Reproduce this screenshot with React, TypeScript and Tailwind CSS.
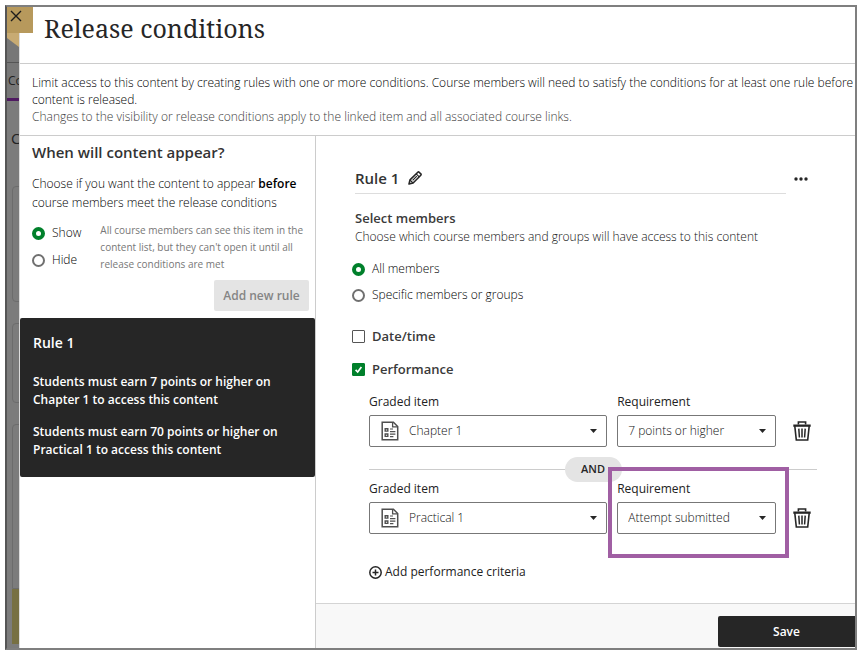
import type { ReactNode } from 'react'

type Criterion = { id: string; item: string; requirement: string; highlighted?: boolean }

const criteria: Criterion[] = [
  { id: 'chapter', item: 'Chapter 1', requirement: '7 points or higher' },
  { id: 'practical', item: 'Practical 1', requirement: 'Attempt submitted', highlighted: true },
]

function Radio({ name, label, checked }: { name: string; label: string; checked?: boolean }) {
  return (
    <label className="flex items-center gap-[7px] text-[12px] leading-[18px] font-light text-black">
      <input
        type="radio"
        name={name}
        defaultChecked={checked}
        className="size-[13px] shrink-0 appearance-none rounded-full border-2 border-[#707070] bg-white checked:border-[4px] checked:border-[#00802b]"
      />
      {label}
    </label>
  )
}

function Checkbox({ label, checked }: { label: string; checked?: boolean }) {
  return (
    <label className="flex items-center gap-[7px] text-[13px] leading-[19px] font-semibold text-[#3a3a3a]">
      <span className="grid size-[13px] shrink-0">
        <input
          type="checkbox"
          defaultChecked={checked}
          className="peer col-start-1 row-start-1 size-[13px] appearance-none rounded-[1px] border border-[#555] bg-white checked:border-[#00802b] checked:bg-[#00802b]"
        />
        <svg
          viewBox="0 0 13 13"
          className="pointer-events-none col-start-1 row-start-1 hidden size-[13px] peer-checked:block"
          fill="none"
          stroke="#fff"
          strokeWidth="1.7"
        >
          <path d="M3.6 6.8 5.7 9 9.4 4" />
        </svg>
      </span>
      {label}
    </label>
  )
}

function DocumentIcon() {
  return (
    <svg viewBox="0 0 18 20" className="h-5 w-[18px]" fill="none" stroke="#4f4f4f" strokeWidth="1.5">
      <path d="M1.2 1.2h11.2l4.3 4.3v13.3H1.2z" />
      <path d="M11.6 1.5v4.4h4.8" strokeWidth="1.3" />
      <path d="M4.2 7.7h2.6v2.4H4.2zM4.2 13h2.6v2.4H4.2z" strokeWidth="1.4" />
      <path d="M9 8h3M9 10.6h5.4M9 13.2h5.4M9 15.7h3.4" strokeWidth="1.2" />
    </svg>
  )
}

function TrashIcon() {
  return (
    <svg viewBox="0 0 18 20" className="h-5 w-[18px]" fill="none" stroke="#262626" strokeWidth="1.6">
      <path d="M5.4 3.4V1h7.2v2.4" />
      <path d="M.3 3.5h17.4v2.3H.3z" fill="#262626" stroke="none" />
      <path d="M1.8 5.2 3.3 19h11.4l1.5-13.8" />
      <path d="M5.8 7.6l.6 8.9M9 7.6v8.9M12.2 7.6l-.6 8.9" strokeWidth="1.5" />
    </svg>
  )
}

function Dropdown({ id, label, value, icon }: { id: string; label: string; value: string; icon?: ReactNode }) {
  return (
    <div className="flex min-w-0 flex-col gap-1">
      <label htmlFor={id} className="text-[12px] leading-[18px] font-medium text-[#222]">
        {label}
      </label>
      <div className="grid items-center">
        <select
          id={id}
          className={`col-start-1 row-start-1 h-8 w-full appearance-none rounded-[2px] border border-[#777] bg-white pr-6 text-[12px] font-light text-[#111] ${icon ? 'pl-[39px]' : 'pl-[10px]'}`}
        >
          <option>{value}</option>
        </select>
        {icon && <span className="pointer-events-none col-start-1 row-start-1 justify-self-start pl-3">{icon}</span>}
        <svg viewBox="0 0 7 4" className="pointer-events-none col-start-1 row-start-1 mr-[10px] h-1 w-[7px] justify-self-end">
          <path d="M0 0h7L3.5 4z" fill="#262626" />
        </svg>
      </div>
    </div>
  )
}

function CriterionRow({ id, item, requirement, highlighted }: Criterion) {
  return (
    <div className="grid grid-cols-[3fr_2fr_31px] gap-x-[10px]">
      <Dropdown id={`${id}-item`} label="Graded item" value={item} icon={<DocumentIcon />} />
      <div className="relative">
        <Dropdown id={`${id}-requirement`} label="Requirement" value={requirement} />
        {highlighted && (
          <div className="pointer-events-none absolute -top-[13px] -right-[13px] -bottom-6 -left-[9px] border-4 border-[#a05fa3]" />
        )}
      </div>
      <button type="button" aria-label={`Delete ${item}`} className="mt-[22px] flex h-8 items-center pl-[7px]">
        <TrashIcon />
      </button>
    </div>
  )
}

function CourseEdge() {
  return (
    <div className="flex w-3 shrink-0 flex-col overflow-hidden bg-[#777] text-[12px] leading-[18px] text-[#222]">
      <div className="h-[56px] border-b border-[#555]">
        <svg viewBox="0 0 12 40" className="h-10 w-3">
          <path d="M0 0h12v40L0 31z" fill="#c8ab73" />
        </svg>
      </div>
      <span className="mt-[9px] pl-px">Co</span>
      <div className="mt-[8px] h-[3px] shrink-0 bg-[#4f1a61]" />
      <div className="flex flex-1 flex-col bg-[#7c7c7c]">
        <span className="mt-[28px] pl-1 text-[15px]">C</span>
        <div className="mt-[39px] ml-[5px] h-[116px] w-8 rounded border border-[#6c6c6c]" />
        <div className="mt-[21px] ml-[5px] h-[80px] w-8 rounded border border-[#6c6c6c]" />
        <div className="mt-[21px] ml-[5px] w-8 flex-1 rounded-t border border-[#6c6c6c]" />
        <div className="mb-1 ml-[5px] h-[55px] bg-[#777043]" />
      </div>
    </div>
  )
}

export default function App() {
  return (
    <div className="flex min-h-screen bg-white pt-[5px] pr-1 pb-[3px] pl-[5px] font-['Open_Sans','Noto_Sans',sans-serif]">
      <div className="relative flex flex-1 border-2 border-[#7f7f7f] border-l-[#555]">
        <CourseEdge />
        <button
          type="button"
          aria-label="Close"
          className="absolute top-0 left-0 flex size-[26px] items-center justify-center bg-[#b7995c] pr-2 pb-2"
        >
          <svg viewBox="0 0 12 12" className="size-3 shrink-0" stroke="#1c1c1c" strokeWidth="1.4">
            <path d="m1 1 10 10M11 1 1 11" />
          </svg>
        </button>

        <div className="flex min-w-0 flex-1 flex-col border-l border-[#ddd]">
          <header className="h-[57px] border-b border-[#ccc] pt-[3px] pl-6">
            <h1 className="font-['Noto_Serif','DejaVu_Serif',serif] text-[25px] leading-9 text-[#262626]">
              Release conditions
            </h1>
          </header>
          <div className="border-b border-[#ccc] py-[10px] pl-3 text-[12px] leading-[17px] font-light text-black">
            <p>
              Limit access to this content by creating rules with one or more conditions. Course members will need to
              satisfy the conditions for at least one rule before content is released.
            </p>
            <p className="text-[#3d3d3d]">
              Changes to the visibility or release conditions apply to the linked item and all associated course links.
            </p>
          </div>

          <div className="flex flex-1">
            <aside className="flex w-[296px] shrink-0 flex-col border-r border-[#ccc]">
              <div className="flex flex-col px-3 pt-[6px] pb-[7px]">
                <h2 className="text-[15px] leading-5 font-semibold text-[#333]">When will content appear?</h2>
                <p className="mt-3 text-[12px] leading-[19px] font-light text-black">
                  Choose if you want the content to appear <b className="font-semibold">before</b> course members meet
                  the release conditions
                </p>
                <div className="mt-[9px] -mr-2 flex gap-[19px]">
                  <fieldset className="mt-[3px] flex shrink-0 flex-col gap-[9px]">
                    <Radio name="visibility" label="Show" checked />
                    <Radio name="visibility" label="Hide" />
                  </fieldset>
                  <p className="mt-px text-[10px] leading-[17px] text-[#777]">
                    All course members can see this item in the content list, but they can't open it until all release
                    conditions are met
                  </p>
                </div>
                <button
                  type="button"
                  disabled
                  className="mt-[7px] -mr-[6px] h-[31px] w-[95px] self-end rounded-[2px] bg-[#e4e4e4] text-[12px] font-semibold text-[#858585]"
                >
                  Add new rule
                </button>
              </div>
              <section className="rounded-[2px] bg-[#262626] px-[13px] pt-[15px] pb-[18px] text-[12px] leading-[18px] font-semibold text-white">
                <h3 className="text-[14px] leading-5">Rule 1</h3>
                <p className="mt-5">Students must earn 7 points or higher on Chapter 1 to access this content</p>
                <p className="mt-[14px]">Students must earn 70 points or higher on Practical 1 to access this content</p>
              </section>
            </aside>

            <main className="flex min-w-0 flex-1 flex-col">
              <div className="flex flex-1 flex-col pr-[38px] pl-9">
                <div className="flex gap-2 pl-[3px]">
                  <div className="mt-[32px] flex flex-1 items-center gap-[9px] border-b border-[#ddd] pb-[5px]">
                    <h2 className="text-[15px] leading-5 font-semibold text-[#333]">Rule 1</h2>
                    <button type="button" aria-label="Rename rule">
                      <svg viewBox="0 0 14 14" className="size-[14px]" fill="none" stroke="#262626" strokeWidth="1.6" strokeLinejoin="round">
                        <path d="M1 13 2 8.9 9.8 1.2q.6-.6 1.3 0l1.7 1.7q.6.6 0 1.3L5.1 12z" />
                        <path d="m8.2 2.8 3 3M4.6 9.4l4.2-4.2M2 9l3 3" strokeWidth="1.2" />
                      </svg>
                    </button>
                  </div>
                  <button type="button" aria-label="More options" className="mt-[37px] h-3 w-[23px]">
                    <svg viewBox="0 0 14 4" className="h-1 w-[14px]" fill="#262626">
                      <circle cx="2" cy="2" r="1.7" />
                      <circle cx="7" cy="2" r="1.7" />
                      <circle cx="12" cy="2" r="1.7" />
                    </svg>
                  </button>
                </div>
                <div className="mt-[14px] pl-[3px]">
                  <h3 className="text-[13px] leading-5 font-semibold text-[#3a3a3a]">Select members</h3>
                  <p className="text-[12px] leading-[18px] font-light text-[#111]">
                    Choose which course members and groups will have access to this content
                  </p>
                </div>
                <fieldset className="mt-[14px] flex flex-col gap-2">
                  <Radio name="members" label="All members" checked />
                  <Radio name="members" label="Specific members or groups" />
                </fieldset>
                <div className="mt-[23px] flex flex-col gap-[14px]">
                  <Checkbox label="Date/time" />
                  <Checkbox label="Performance" checked />
                </div>
                <div className="mt-[14px] pl-[17px]">
                  <CriterionRow {...criteria[0]} />
                  <div className="mt-[10px] flex items-center">
                    <div className="h-px flex-1 bg-[#ccc]" />
                    <span className="flex h-[25px] w-[57px] items-center justify-center rounded-full bg-[#e4e4e4] text-[11px] font-semibold text-[#262626]">
                      AND
                    </span>
                    <div className="h-px flex-1 bg-[#ccc]" />
                  </div>
                  <div className="-mt-[2px]">
                    <CriterionRow {...criteria[1]} />
                  </div>
                  <button
                    type="button"
                    className="mt-[29px] flex items-center gap-[3px] text-[12px] leading-[18px] font-medium text-[#222]"
                  >
                    <svg viewBox="0 0 13 13" className="size-[13px]" fill="none" stroke="#262626" strokeWidth="1.5">
                      <circle cx="6.5" cy="6.5" r="5.7" />
                      <path d="M6.5 3.5v6M3.5 6.5h6" />
                    </svg>
                    Add performance criteria
                  </button>
                </div>
              </div>
              <footer className="flex justify-end border-t border-[#d4d4d4] bg-[#f8f8f8] pt-3 pb-px">
                <button type="button" className="h-[31px] w-[137px] rounded-l-[2px] bg-[#262626] text-[12px] font-semibold text-white">
                  Save
                </button>
              </footer>
            </main>
          </div>
        </div>
      </div>
    </div>
  )
}
